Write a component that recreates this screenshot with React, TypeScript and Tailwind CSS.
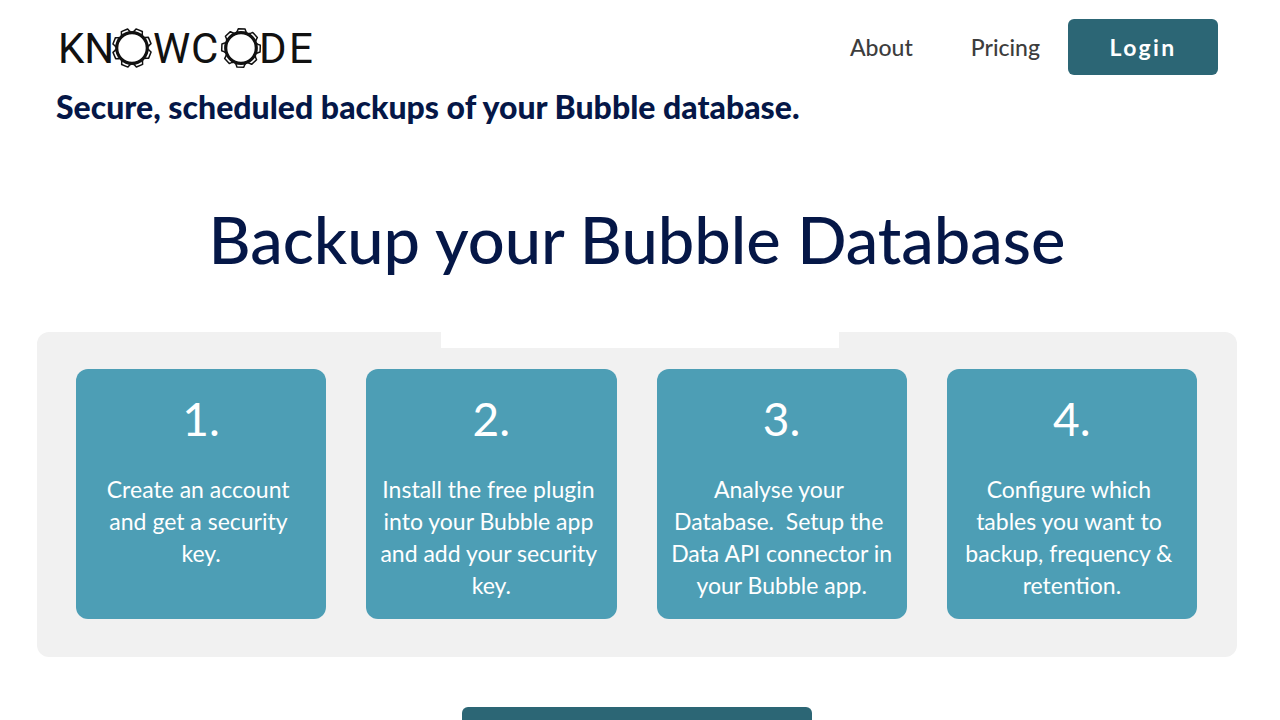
const steps = [
  { title: "1.", text: "Create an account \nand get a security \nkey." },
  { title: "2.", text: "Install the free plugin \ninto your Bubble app \nand add your security \nkey." },
  { title: "3.", text: "Analyse your \nDatabase.  Setup the \nData API connector in\nyour Bubble app." },
  { title: "4.", text: "Configure which \ntables you want to \nbackup, frequency & \nretention." },
];

function Gear({ cx, cy, start }: { cx: number; cy: number; start: number }) {
  const teeth = [0, 1, 2, 3, 4, 5, 6, 7];
  return (
    <g transform={`translate(${cx} ${cy})`} fill="none" stroke="#111">
      <circle r="15.3" strokeWidth="3.2" />
      {teeth.map((n) => (
        <path
          key={n}
          d="M-5.2 -15.6L-4.4 -16.4L-3.4 -19.2H3.4L4.4 -16.4L5.2 -15.6"
          strokeWidth="1.5"
          strokeLinejoin="round"
          transform={`rotate(${start + n * 45})`}
        />
      ))}
    </g>
  );
}

function Logo() {
  return (
    <svg
      width="260"
      height="56"
      viewBox="0 0 260 56"
      role="img"
      aria-label="Knowcode"
      className="font-['Roboto',sans-serif] text-[42px] font-normal"
      fill="#111"
    >
      <text x="2" y="44">KN</text>
      <Gear cx={76} cy={29} start={22} />
      <text x="97" y="44">W</text>
      <text x="135" y="44">C</text>
      <Gear cx={185} cy={29} start={2} />
      <text x="203" y="44">D</text>
      <text x="233" y="44">E</text>
    </svg>
  );
}

export default function App() {
  return (
    <div className="bg-white pl-[37px] pr-[43px] font-['Lato',sans-serif] text-[#3d3d3d]">
      <header className="flex items-center justify-between pt-[19px] pl-[19px] pr-[19px]">
        <a href="#home">
          <Logo />
        </a>
        <nav className="flex items-center text-[23px] font-medium">
          <a href="#about" className="mr-[58px]">About</a>
          <a href="#pricing" className="mr-7">Pricing</a>
          <button className="h-14 w-[150px] rounded-md bg-[#2c6675] text-[23px] font-bold tracking-widest text-white">
            Login
          </button>
        </nav>
      </header>

      <h2 className="mt-3 pl-[19px] text-[32px] leading-10 font-black text-[#051747]">
        Secure, scheduled backups of your Bubble database.
      </h2>

      <h1 className="mt-[70px] text-center text-[65px] leading-[84px] font-medium text-[#051747]">
        Backup your Bubble Database
      </h1>

      <section className="relative mt-[51px] rounded-xl bg-[#f1f1f1] pt-[37px] pr-10 pb-[38px] pl-[39px]">
        <div className="absolute top-0 left-[404px] h-4 w-[398px] bg-white" />
        <div className="grid grid-cols-4 gap-10">
          {steps.map((step) => (
            <article key={step.title} className="min-h-[250px] rounded-xl bg-[#4d9eb5] px-2 text-center text-white">
              <h3 className="pt-5 text-[46px] leading-[60px]">{step.title}</h3>
              <p className="mt-6 text-[23px] leading-8 whitespace-break-spaces">{step.text}</p>
            </article>
          ))}
        </div>
      </section>

      <div className="mt-[50px] flex justify-center">
        <button aria-label="Get started" className="h-14 w-[350px] rounded-md bg-[#2c6675]" />
      </div>
    </div>
  );
}
